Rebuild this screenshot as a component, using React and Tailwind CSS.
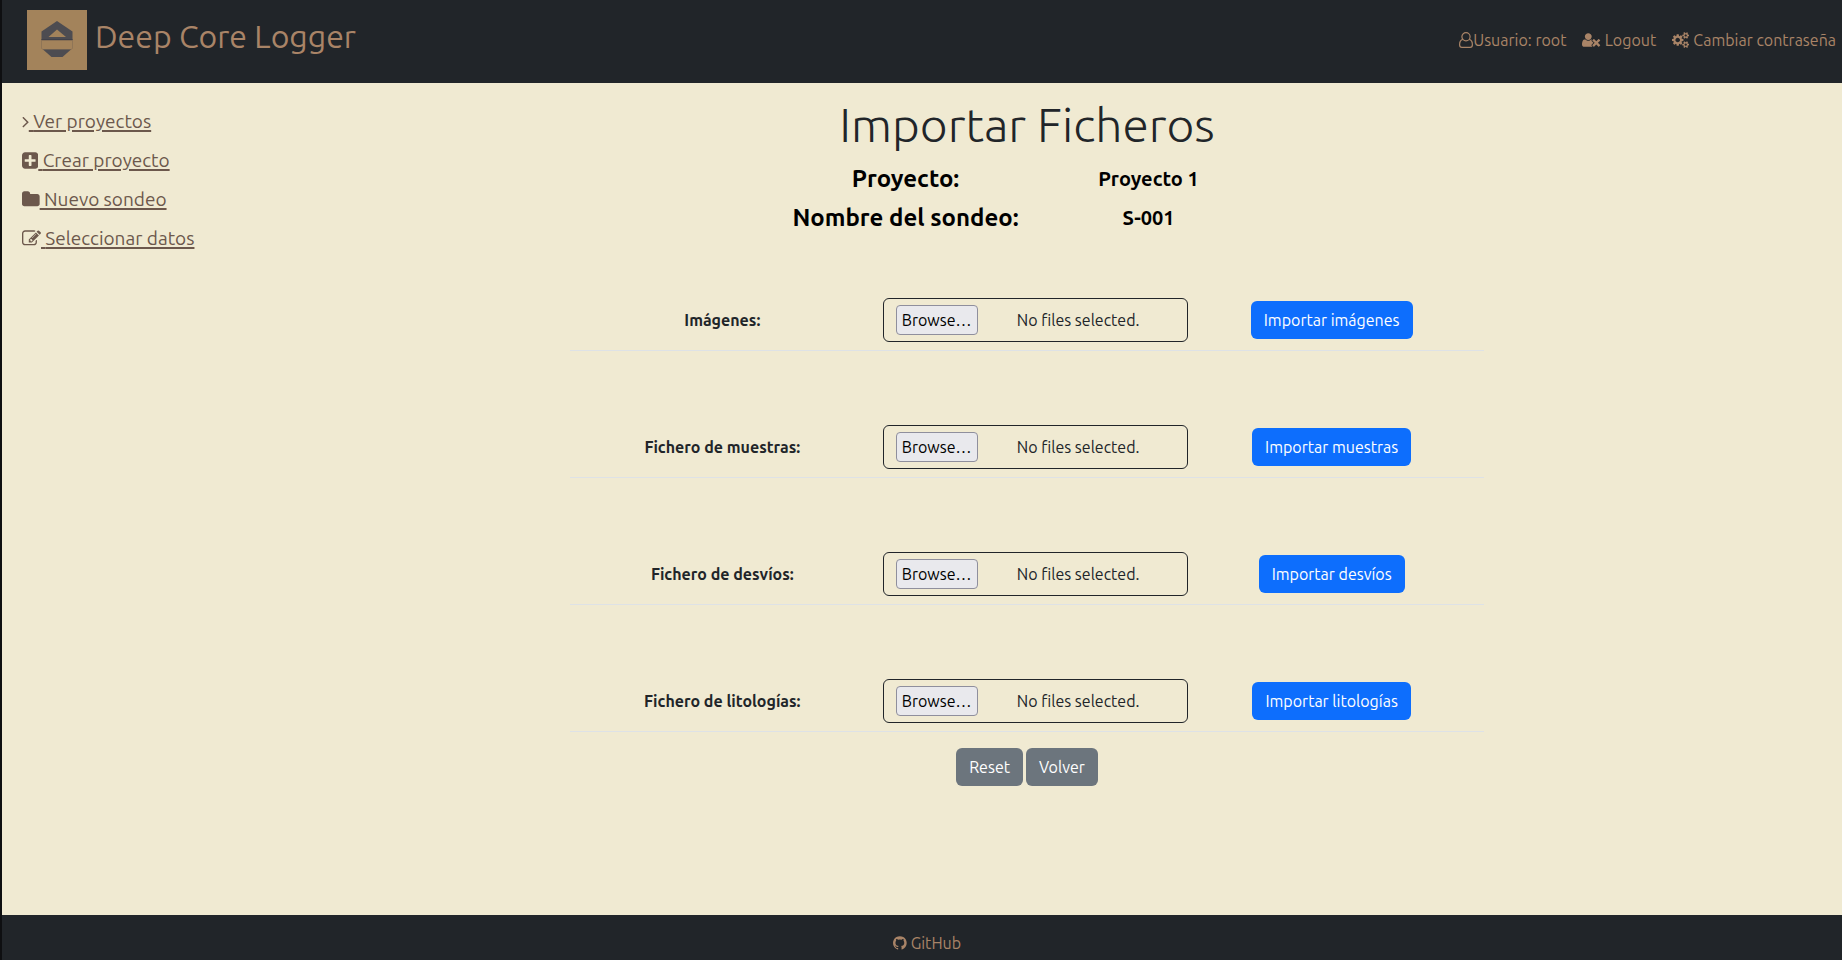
const ICONS = {
  angle: {
    box: '544 0 640 1792',
    d: 'M1171 960q0 13-10 23l-466 466q-10 10-23 10t-23-10l-50-50q-10-10-10-23t10-23l393-393-393-393q-10-10-10-23t10-23l50-50q10-10 23-10t23 10l466 466q10 10 10 23z',
  },
  plus: {
    box: '128 0 1536 1792',
    d: 'M1408 960v-128q0-26-19-45t-45-19h-320v-320q0-26-19-45t-45-19h-128q-26 0-45 19t-19 45v320h-320q-26 0-45 19t-19 45v128q0 26 19 45t45 19h320v320q0 26 19 45t45 19h128q26 0 45-19t19-45v-320h320q26 0 45-19t19-45zm256-544v960q0 119-84.5 203.5t-203.5 84.5h-960q-119 0-203.5-84.5t-84.5-203.5v-960q0-119 84.5-203.5t203.5-84.5h960q119 0 203.5 84.5t84.5 203.5z',
  },
  folder: {
    box: '64 0 1664 1792',
    d: 'M1728 608v704q0 92-66 158t-158 66h-1216q-92 0-158-66t-66-158v-960q0-92 66-158t158-66h320q92 0 158 66t66 158v32h672q92 0 158 66t66 158z',
  },
  edit: {
    box: '0 0 1792 1792',
    d: 'M888 1184l116-116-152-152-116 116v56h96v96h56zm440-720q-16-16-33 1l-350 350q-17 17-1 33t33-1l350-350q17-17 1-33zm80 594v190q0 119-84.5 203.5t-203.5 84.5h-832q-119 0-203.5-84.5t-84.5-203.5v-832q0-119 84.5-203.5t203.5-84.5h832q63 0 117 25 15 7 18 23 3 17-9 29l-49 49q-14 14-32 8-23-6-45-6h-832q-66 0-113 47t-47 113v832q0 66 47 113t113 47h832q66 0 113-47t47-113v-126q0-13 9-22l64-64q15-15 35-7t20 29zm-96-738l288 288-672 672h-288v-288zm444 132l-92 92-288-288 92-92q28-28 68-28t68 28l152 152q28 28 28 68t-28 68z',
  },
  userTimes: {
    box: '0 0 2048 1792',
    d: 'M704 896q-159 0-271.5-112.5t-112.5-271.5 112.5-271.5 271.5-112.5 271.5 112.5 112.5 271.5-112.5 271.5-271.5 112.5zm1077 320l249 249q9 9 9 23 0 13-9 22l-136 136q-9 9-22 9-14 0-23-9l-249-249-249 249q-9 9-23 9-13 0-22-9l-136-136q-9-9-9-22 0-14 9-23l249-249-249-249q-9-9-9-23 0-13 9-22l136-136q9-9 22-9 14 0 23 9l249 249 249-249q9-9 23-9 13 0 22 9l136 136q9 9 9 22 0 14-9 23zM1283 1216l-181 181q-37 37-37 91 0 53 37 90l83 83q-21 3-44 3h-874q-121 0-194-69t-73-190q0-53 3.5-103.5t14-109 26.5-108.5 43-97.5 62-81 85.5-53.5 111.5-20q19 0 39 17 79 61 154.5 91.5t164.5 30.5 164.5-30.5 154.5-91.5q20-17 39-17 20 0 42 3l-2 20q-37 37-37 90t37 90z',
  },
  cogs: {
    box: '-64 0 1920 1792',
    d: 'M832 896q0-106-75-181t-181-75-181 75-75 181 75 181 181 75 181-75 75-181zm768 512q0-52-38-90t-90-38-90 38-38 90q0 53 37.5 90.5t90.5 37.5 90.5-37.5 37.5-90.5zm0-1024q0-52-38-90t-90-38-90 38-38 90q0 53 37.5 90.5t90.5 37.5 90.5-37.5 37.5-90.5zm-384 421v185q0 10-7 19.5t-16 10.5l-155 24q-11 35-32 76 34 48 90 115 7 11 7 20 0 12-7 19-23 30-82.5 89.5t-78.5 59.5q-11 0-21-7l-115-90q-37 19-77 31-11 108-23 155-7 24-30 24h-186q-11 0-20-7.5t-10-17.5l-23-153q-34-10-75-31l-118 89q-7 7-20 7-11 0-21-8-144-133-144-160 0-9 7-19 10-14 41-53t47-61q-23-44-35-82l-152-24q-10-1-17-9.5t-7-19.5v-185q0-10 7-19.5t16-10.5l155-24q11-35 32-76-34-48-90-115-7-11-7-20 0-12 7-20 22-30 82-89t79-59q11 0 21 7l115 90q34-18 77-32 11-108 23-154 7-24 30-24h186q11 0 20 7.5t10 17.5l23 153q34 10 75 31l118-89q8-7 20-7 11 0 21 8 144 133 144 160 0 8-7 19-12 16-42 54t-45 60q23 48 34 82l152 23q10 2 17 10.5t7 19.5zm640 533v140q0 16-149 31-12 27-30 52 51 113 51 138 0 4-4 7-122 71-124 71-8 0-46-47t-52-68q-20 2-30 2t-30-2q-14 21-52 68t-46 47q-2 0-124-71-4-3-4-7 0-25 51-138-18-25-30-52-149-15-149-31v-140q0-16 149-31 13-29 30-52-51-113-51-138 0-4 4-7 4-2 35-20t59-34 30-16q8 0 46 46.5t52 67.5q20-2 30-2t30 2q51-71 92-112l6-2q4 0 124 70 4 3 4 7 0 25-51 138 17 23 30 52 149 15 149 31zm0-1024v140q0 16-149 31-12 27-30 52 51 113 51 138 0 4-4 7-122 71-124 71-8 0-46-47t-52-68q-20 2-30 2t-30-2q-14 21-52 68t-46 47q-2 0-124-71-4-3-4-7 0-25 51-138-18-25-30-52-149-15-149-31v-140q0-16 149-31 13-29 30-52-51-113-51-138 0-4 4-7 4-2 35-20t59-34 30-16q8 0 46 46.5t52 67.5q20-2 30-2t30 2q51-71 92-112l6-2q4 0 124 70 4 3 4 7 0 25-51 138 17 23 30 52 149 15 149 31z',
  },
  github: {
    box: '128 0 1536 1792',
    d: 'M896 128q209 0 385.5 103t279.5 279.5 103 385.5q0 251-146.5 451.5t-378.5 277.5q-27 5-40-7t-13-30q0-3 .5-76.5t.5-134.5q0-97-52-142 57-6 102.5-18t94-39 81-66.5 53-105 20.5-150.5q0-119-79-206 37-91-8-204-28-9-81 11t-92 44l-38 24q-93-26-192-26t-192 26q-16-11-42.5-27t-83.5-38.5-85-13.5q-45 113-8 204-79 87-79 206 0 85 20.5 150t52.5 105 80.5 67 94 39 102.5 18q-39 36-49 103-21 10-45 15t-57 5-65.5-21.5-55.5-62.5q-19-32-48.5-52t-49.5-24l-20-3q-21 0-29 4.5t-5 11.5 9 14 13 12l7 5q22 10 43.5 38t31.5 51l10 23q13 38 44 61.5t67 30 69.5 7 55.5-3.5l23-4q0 38 .5 88.5t.5 54.5q0 18-13 30t-40 7q-232-77-378.5-277.5t-146.5-451.5q0-209 103-385.5t279.5-279.5 385.5-103z',
  },
};

function Icon({ name, className }) {
  const { box, d } = ICONS[name];
  return (
    <svg viewBox={box} className={`w-auto shrink-0 ${className}`} fill="currentColor" aria-hidden="true">
      <path d={d} />
    </svg>
  );
}

function UserOutline() {
  return (
    <svg viewBox="0 0 14 16" className="h-4 w-auto shrink-0" fill="none" stroke="currentColor" strokeWidth="1.2" aria-hidden="true">
      <ellipse cx="7" cy="4.7" rx="4.1" ry="4.1" />
      <path d="M3.8 7.4C1.6 7.9.6 10.2.6 12.7c0 1.7 1 2.6 2.300 2.600h8.200c1.300 0 2.300-.9 2.300-2.600 0-2.500-1-4.800-3.200-5.300" />
    </svg>
  );
}

function Logo() {
  return (
    <svg viewBox="0 0 60 60" className="size-[60px] shrink-0" aria-hidden="true">
      <rect width="60" height="60" fill="#a3835b" />
      <path d="M30 11L45.5 21.5V30.5H14.5V21.5Z" fill="#4d4c51" />
      <path d="M30 19.5L39 27H21.5Z" fill="#a3835b" />
      <rect x="14.5" y="29" width="31" height="1.2" fill="#414149" />
      <path d="M14.5 30.5V38.5L16 39.5H44L45.5 38.5V30.5Z" fill="#a3835b" stroke="#8a7156" strokeWidth=".8" />
      <path d="M16 39.5H44L35.5 47H24.5Z" fill="#4d4c51" />
    </svg>
  );
}

const LINKS = [
  { icon: 'angle', text: 'Ver proyectos' },
  { icon: 'plus', text: 'Crear proyecto' },
  { icon: 'folder', text: 'Nuevo sondeo' },
  { icon: 'edit', text: 'Seleccionar datos' },
];

const FILES = [
  { id: 'imagenes', label: 'Imágenes:', action: 'Importar imágenes' },
  { id: 'muestras', label: 'Fichero de muestras:', action: 'Importar muestras' },
  { id: 'desvios', label: 'Fichero de desvíos:', action: 'Importar desvíos' },
  { id: 'litologias', label: 'Fichero de litologías:', action: 'Importar litologías' },
];

function FileRow({ id, label, action }) {
  return (
    <tr className="h-[127px] border-b border-[#dee2e6]">
      <th scope="row" className="p-2 pb-[18px] align-bottom">
        <label htmlFor={id}>{label}</label>
      </th>
      <td className="p-2 align-bottom">
        <input id={id} type="file" multiple className="peer sr-only" />
        <label
          htmlFor={id}
          className="flex h-11 w-[305px] items-center rounded-md border border-[#212529] pr-2 pl-3 peer-focus-visible:ring-2"
        >
          <span className="flex h-[30px] w-[82px] items-center justify-center rounded border border-[#8f8f9d] bg-[#e9e9ed] text-black">
            Browse…
          </span>
          <span className="flex-1 text-center">No files selected.</span>
        </label>
      </td>
      <td className="p-2 pb-[11px] text-center align-bottom">
        <button type="submit" className="h-[38px] rounded-md bg-[#0d6efd] px-[13px] text-white">
          {action}
        </button>
      </td>
    </tr>
  );
}

export default function App() {
  return (
    <div className="flex min-h-screen flex-col border-l-2 border-[#0e0f11] bg-[#f0ead2] font-['Ubuntu','Noto_Sans',sans-serif] text-base text-[#212529]">
      <header className="flex h-[83px] items-center justify-between bg-[#212529] pr-[6px] pb-[3px] pl-[25px] text-[#a98467]">
        <a href="#inicio" className="flex items-center gap-2 text-[32px] leading-9">
          <Logo />
          <span className="pb-2">Deep Core Logger</span>
        </a>
        <nav className="flex gap-4 leading-6">
          <a href="#usuario" className="flex items-center">
            <UserOutline />
            Usuario: root
          </a>
          <a href="#logout" className="flex items-center gap-1">
            <Icon name="userTimes" className="h-4" />
            Logout
          </a>
          <a href="#contrasena" className="flex items-center gap-1">
            <Icon name="cogs" className="h-4" />
            Cambiar contraseña
          </a>
        </nav>
      </header>

      <div className="flex flex-1">
        <aside className="w-[210px] shrink-0 pt-[23px] pl-5">
          <ul className="flex flex-col gap-[9px] text-[19px] leading-[30px] text-[#6c584c]">
            {LINKS.map(({ icon, text }) => (
              <li key={icon}>
                <a href={`#${icon}`} className="flex items-center whitespace-nowrap">
                  <Icon name={icon} className="h-[19px]" />
                  <span className="underline decoration-2 underline-offset-2">&nbsp;{text}</span>
                </a>
              </li>
            ))}
          </ul>
        </aside>

        <main className="flex flex-1 flex-col items-center pt-3">
          <h1 className="text-5xl leading-[58px] font-light">Importar Ficheros</h1>
          <table className="mt-[6px] w-[486px] table-fixed text-center text-black">
            <tbody>
              <tr className="h-[39px]">
                <th scope="row" className="text-2xl font-semibold whitespace-nowrap">Proyecto:</th>
                <td className="text-xl font-semibold">Proyecto 1</td>
              </tr>
              <tr className="h-[39px]">
                <th scope="row" className="text-2xl font-semibold whitespace-nowrap">Nombre del sondeo:</th>
                <td className="text-xl font-semibold">S-001</td>
              </tr>
            </tbody>
          </table>

          <form className="mt-[-14px] w-full max-w-[914px]">
            <table className="w-full table-fixed">
              <tbody>
                {FILES.map((file) => (
                  <FileRow key={file.id} {...file} />
                ))}
              </tbody>
            </table>
            <div className="mt-4 flex justify-center gap-[3px] text-white">
              <button type="reset" className="h-[38px] rounded-md bg-[#6c757d] px-[13px]">Reset</button>
              <button type="button" className="h-[38px] rounded-md bg-[#6c757d] px-[13px]">Volver</button>
            </div>
          </form>
        </main>
      </div>

      <footer className="flex h-[45px] items-center justify-center bg-[#212529] pt-[11px] pl-[10px] text-[#a98467]">
        <a href="#github" className="flex items-center gap-1">
          <Icon name="github" className="h-4" />
          GitHub
        </a>
      </footer>
    </div>
  );
}
